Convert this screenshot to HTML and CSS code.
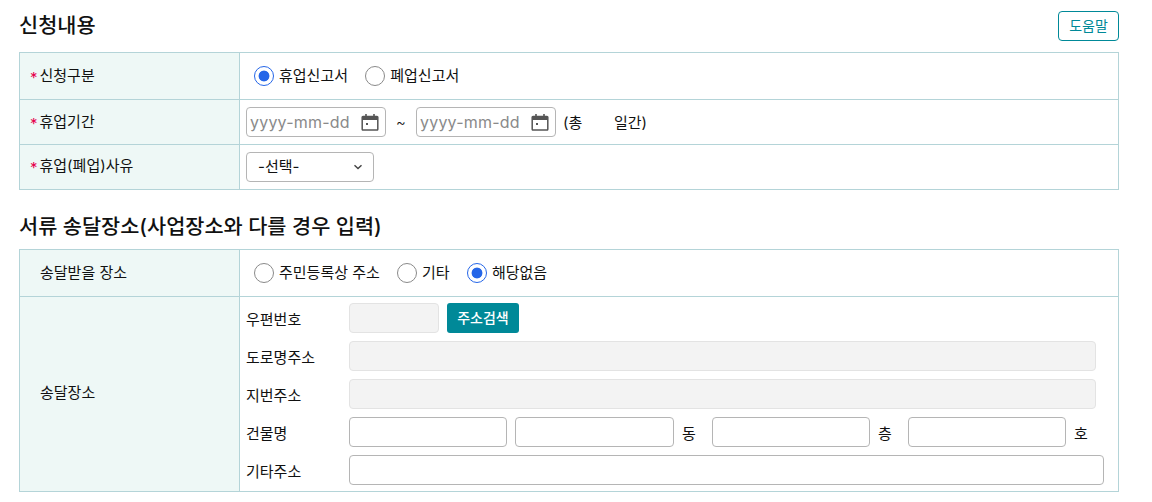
FILE: index.html
```html
<!DOCTYPE html>
<html lang="ko">
<head>
  <meta charset="UTF-8">
  <meta name="viewport" content="width=device-width, initial-scale=1.0">
  <title>신청내용</title>
  <link rel="stylesheet" href="styles.css">
</head>
<body>
  <div class="page">
    <div class="title-row">
      <h2>신청내용</h2>
      <button class="help-btn" type="button">도움말</button>
    </div>
    <table class="form-table">
      <tr class="row-a">
        <th><span class="req">*</span>신청구분</th>
        <td class="radios">
          <label class="radio"><input type="radio" name="kind" checked>휴업신고서</label>
          <label class="radio"><input type="radio" name="kind">폐업신고서</label>
        </td>
      </tr>
      <tr class="row-b">
        <th><span class="req">*</span>휴업기간</th>
        <td>
          <div class="period">
            <div class="date">
              <span>yyyy-mm-dd</span>
              <svg width="18" height="18" viewBox="0 0 18 18"><path d="M2 3.5h14a.8.8 0 0 1 .8.8v12a.8.8 0 0 1-.8.8H2a.8.8 0 0 1-.8-.8v-12a.8.8 0 0 1 .8-.8z" fill="none" stroke="#555" stroke-width="1.5"/><path d="M1.5 3.5h15v3.6h-15zM4.2 1h1.6v3H4.2zM12.2 1h1.6v3h-1.6zM5 10h2v2H5z" fill="#555"/></svg>
            </div>
            <span class="tilde">~</span>
            <div class="date">
              <span>yyyy-mm-dd</span>
              <svg width="18" height="18" viewBox="0 0 18 18"><path d="M2 3.5h14a.8.8 0 0 1 .8.8v12a.8.8 0 0 1-.8.8H2a.8.8 0 0 1-.8-.8v-12a.8.8 0 0 1 .8-.8z" fill="none" stroke="#555" stroke-width="1.5"/><path d="M1.5 3.5h15v3.6h-15zM4.2 1h1.6v3H4.2zM12.2 1h1.6v3h-1.6zM5 10h2v2H5z" fill="#555"/></svg>
            </div>
            <span class="total">(총</span>
            <span class="days">일간)</span>
          </div>
        </td>
      </tr>
      <tr class="row-b">
        <th class="reason"><span class="req">*</span>휴업(폐업)사유</th>
        <td>
          <div class="select-box">-선택-
            <svg width="10" height="6" viewBox="0 0 10 6"><path d="M1.5 1.2 5 4.6l3.5-3.4" fill="none" stroke="#444" stroke-width="1.4"/></svg>
          </div>
        </td>
      </tr>
    </table>

    <h2 class="second-title">서류 송달장소(사업장소와 다를 경우 입력)</h2>
    <table class="form-table">
      <tr class="row-a">
        <th class="plain">송달받을 장소</th>
        <td class="radios">
          <label class="radio"><input type="radio" name="place">주민등록상 주소</label>
          <label class="radio"><input type="radio" name="place">기타</label>
          <label class="radio"><input type="radio" name="place" checked>해당없음</label>
        </td>
      </tr>
      <tr>
        <th class="plain tall">송달장소</th>
        <td class="addr-cell">
          <div class="addr">
            <span class="addr-label">우편번호</span>
            <div class="addr-line zip-line">
              <input class="zip" type="text" disabled>
              <button class="search-btn" type="button">주소검색</button>
            </div>
            <span class="addr-label">도로명주소</span>
            <div class="addr-line"><input class="wide" type="text" disabled></div>
            <span class="addr-label">지번주소</span>
            <div class="addr-line"><input class="wide" type="text" disabled></div>
            <span class="addr-label">건물명</span>
            <div class="addr-line building">
              <input type="text">
              <input type="text">
              <span class="unit">동</span>
              <input type="text">
              <span class="unit">층</span>
              <input type="text">
              <span class="unit">호</span>
            </div>
            <span class="addr-label">기타주소</span>
            <div class="addr-line"><input class="full" type="text"></div>
          </div>
        </td>
      </tr>
    </table>
  </div>
</body>
</html>
```

FILE: styles.css
```css
* {
  box-sizing: border-box;
}
body {
  margin: 0;
  font-family: "Inter", "Noto Sans CJK KR", "Noto Sans", sans-serif;
  font-size: 15px;
  line-height: 20px;
  color: #111;
  background: #fff;
}
.page {
  width: 1100px;
  margin-left: 19px;
}
.title-row {
  display: flex;
  justify-content: space-between;
  align-items: center;
  height: 52px;
}
h2 {
  margin: 0;
  font-size: 20.8px;
  font-weight: 500;
  line-height: 28px;
}
.second-title {
  margin-top: 23px;
  margin-bottom: 8px;
}
.help-btn {
  width: 61px;
  height: 30px;
  padding: 0;
  background: #fff;
  border: 1px solid #008998;
  border-radius: 4px;
  color: #008998;
  font: inherit;
  font-size: 14px;
}
.form-table {
  width: 100%;
  table-layout: fixed;
  border-collapse: collapse;
}
.form-table th,
.form-table td {
  border: 1px solid #b4d4d8;
  padding: 0 6px;
  text-align: left;
}
.form-table th {
  width: 220px;
  padding-left: 10px;
  padding-top: 2px;
  background: #eef8f6;
  font-weight: 400;
}
.form-table th.reason {
  padding-top: 0;
}
.form-table th.plain {
  padding-left: 20px;
  padding-top: 0;
}
.form-table th.tall {
  padding-bottom: 2px;
}
.row-a {
  height: 47px;
}
.row-b {
  height: 45px;
}
.req {
  color: #e6004c;
  margin-right: 2px;
  vertical-align: -2px;
}
.form-table .radios {
  padding-left: 14px;
  padding-top: 4px;
}
.radio {
  display: inline-flex;
  align-items: center;
  margin-right: 13px;
}
.radio input {
  appearance: none;
  width: 20px;
  height: 20px;
  margin: 0 5px 0 0;
  border: 1px solid #8a8a8a;
  border-radius: 50%;
  background: #fff;
}
.radio input:checked {
  border-color: #2566e8;
  background: radial-gradient(circle, #2566e8 0, #2566e8 5px, #fff 5.8px);
}
input[type="text"],
.date {
  height: 30px;
  border: 1px solid #b5b5b5;
  border-radius: 4px;
  background: #fff;
  font: inherit;
}
input[disabled] {
  background: #f3f3f3;
  border-color: #e3e3e3;
}
.period {
  display: flex;
  align-items: center;
}
.date {
  display: flex;
  align-items: center;
  justify-content: space-between;
  width: 140px;
  padding: 0 6px 0 3px;
  font-size: 16px;
  letter-spacing: 0.2px;
  color: #8a8a8a;
}
.tilde {
  width: 30px;
  text-align: center;
  font-weight: 300;
}
.tilde,
.total,
.days {
  padding-top: 2px;
}
.total {
  margin-left: 7px;
  width: 51px;
}
.select-box {
  display: flex;
  align-items: center;
  justify-content: space-between;
  width: 128px;
  height: 30px;
  padding: 0 10px 0 11px;
  border: 1px solid #b5b5b5;
  border-radius: 4px;
}
.addr-cell {
  height: 195px;
}
.addr {
  display: grid;
  grid-template-columns: 103px 1fr;
  row-gap: 8px;
  align-items: center;
}
.addr-label,
.unit {
  padding-top: 4px;
}
.addr-line {
  display: flex;
  align-items: center;
  gap: 8px;
}
.zip {
  width: 90px;
}
.wide {
  width: 747px;
}
.full {
  width: 755px;
}
.search-btn {
  width: 72px;
  height: 30px;
  padding: 0;
  border: none;
  border-radius: 3px;
  background: #008998;
  color: #fff;
  font: inherit;
  font-size: 14px;
  font-weight: 500;
}
.building {
  gap: 0;
}
.building input {
  width: 158px;
}
.building input:first-child {
  margin-right: 8px;
}
.building input:nth-child(2) {
  width: 159px;
}
.unit {
  width: 38px;
  padding-left: 8px;
}
```
